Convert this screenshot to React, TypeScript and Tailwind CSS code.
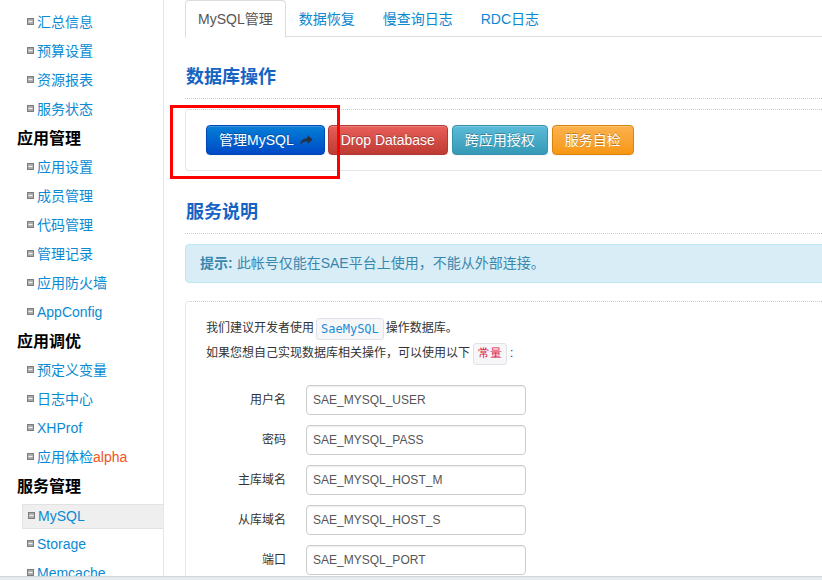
import React from "react";

type NavRow = { kind: "item" | "head"; label: string; active?: boolean; badge?: string };

const navRows: NavRow[] = [
  { kind: "item", label: "汇总信息" },
  { kind: "item", label: "预算设置" },
  { kind: "item", label: "资源报表" },
  { kind: "item", label: "服务状态" },
  { kind: "head", label: "应用管理" },
  { kind: "item", label: "应用设置" },
  { kind: "item", label: "成员管理" },
  { kind: "item", label: "代码管理" },
  { kind: "item", label: "管理记录" },
  { kind: "item", label: "应用防火墙" },
  { kind: "item", label: "AppConfig" },
  { kind: "head", label: "应用调优" },
  { kind: "item", label: "预定义变量" },
  { kind: "item", label: "日志中心" },
  { kind: "item", label: "XHProf" },
  { kind: "item", label: "应用体检", badge: "alpha" },
  { kind: "head", label: "服务管理" },
  { kind: "item", label: "MySQL", active: true },
  { kind: "item", label: "Storage" },
  { kind: "item", label: "Memcache" },
];

const tabs = ["MySQL管理", "数据恢复", "慢查询日志", "RDC日志"];

const constants = [
  { label: "用户名", value: "SAE_MYSQL_USER" },
  { label: "密码", value: "SAE_MYSQL_PASS" },
  { label: "主库域名", value: "SAE_MYSQL_HOST_M" },
  { label: "从库域名", value: "SAE_MYSQL_HOST_S" },
  { label: "端口", value: "SAE_MYSQL_PORT" },
];

const Bullet = () => (
  <svg width="7" height="7" viewBox="0 0 7 7" className="shrink-0 -mt-[3px]">
    <rect x="0.5" y="0.5" width="6" height="6" fill="#a9a9a9" stroke="#7d7d7d" />
    <line x1="1.5" y1="3.5" x2="5.5" y2="3.5" stroke="#f2f2f2" strokeWidth="1.2" />
  </svg>
);

const ShareIcon = () => (
  <svg width="14" height="12" viewBox="0 0 14 12" className="ml-[5px]">
    <path
      d="M1 11 C1.5 6.5 4.5 4.2 8.5 4.2 V1 L13.5 5.6 L8.5 10.2 V7.2 C5.2 7.2 2.8 8.5 1 11 Z"
      fill="#26313d"
    />
  </svg>
);

const Sidebar = () => (
  <aside className="w-[164px] shrink-0 border-r border-[#e6e6e6] pt-[8px] overflow-hidden">
    {navRows.map((row) =>
      row.kind === "head" ? (
        <div
          key={row.label}
          className="h-[29px] flex items-center pl-[17px] text-[16px] font-bold text-black"
        >
          {row.label}
        </div>
      ) : row.active ? (
        <div key={row.label} className="h-[29px] flex items-center">
          <div className="ml-[22px] flex-1 h-[25px] mt-[2px] flex items-center gap-[3px] pl-[5px] bg-[#efefef] border border-r-0 border-[#e2e2e2]">
            <Bullet />
            <span className="text-[14px] text-[#0a8ad2]">{row.label}</span>
          </div>
        </div>
      ) : (
        <div key={row.label} className="h-[29px] flex items-center gap-[3px] pl-[27px]">
          <Bullet />
          <span className="text-[14px] text-[#0a8ad2]">
            {row.label}
            {row.badge && <span className="text-[#f2541b]">{row.badge}</span>}
          </span>
        </div>
      )
    )}
  </aside>
);

const Tabs = () => (
  <ul className="flex h-[37px] border-b border-[#dddddd] w-[calc(100%+20px)]">
    {tabs.map((t, i) =>
      i === 0 ? (
        <li
          key={t}
          className="-mb-px px-[12px] pt-[8px] h-[38px] text-[14px] leading-[20px] text-[#555555] bg-white border border-[#dddddd] border-b-white rounded-t-[4px]"
        >
          {t}
        </li>
      ) : (
        <li
          key={t}
          className="mr-[2px] px-[13px] pt-[9px] text-[14px] leading-[20px] text-[#0a88d0]"
        >
          {t}
        </li>
      )
    )}
  </ul>
);

const SectionTitle = ({ children, className }: { children: React.ReactNode; className: string }) => (
  <div className={className}>
    <h3 className="text-[18px] leading-[24px] font-bold text-[#1563c2] pl-px pb-[9px] border-b border-dotted border-[#c8c8c8] w-[calc(100%+20px)]">
      {children}
    </h3>
  </div>
);

const btnBase =
  "h-[30px] px-[12px] rounded-[4px] text-[14px] text-white flex items-center border [text-shadow:0_-1px_0_rgba(0,0,0,0.25)] shadow-[inset_0_1px_0_rgba(255,255,255,0.2),0_1px_2px_rgba(0,0,0,0.05)]";

export default function App() {
  return (
    <div
      className="relative w-[822px] h-[580px] overflow-hidden bg-white flex flex-col"
      style={{ fontFamily: "'Liberation Sans', 'Noto Sans CJK SC', Arial, sans-serif" }}
    >
      <div className="flex flex-1 min-h-0">
        <Sidebar />

        <main className="flex-1 min-w-0 pl-[21px] overflow-hidden">
          <Tabs />

          <SectionTitle className="mt-[28px]">数据库操作</SectionTitle>

          {/* actions box */}
          <div className="mt-[10px] w-[calc(100%+20px)] border border-[#e6e6e6] [border-top-style:dotted] border-t-[#cfcfcf] rounded-[4px] pl-[20px] py-[15px] flex gap-[3px]">
            <button className={`${btnBase} border-[#0046b8] bg-gradient-to-b from-[#0b7fd6] to-[#0048c6] pr-[11px]`}>
              管理MySQL
              <ShareIcon />
            </button>
            <button className={`${btnBase} border-[#b23a35] bg-gradient-to-b from-[#ea5f5a] to-[#bd3a33]`}>
              Drop Database
            </button>
            <button className={`${btnBase} border-[#3a91ad] bg-gradient-to-b from-[#5bbcda] to-[#3499b6] ml-[1px]`}>
              跨应用授权
            </button>
            <button className={`${btnBase} border-[#d9830d] bg-gradient-to-b from-[#fbb24c] to-[#f7960d] ml-[1px]`}>
              服务自检
            </button>
          </div>

          <SectionTitle className="mt-[29px]">服务说明</SectionTitle>

          <div className="mt-[10px] w-[calc(100%+20px)] h-[39px] flex items-center pl-[14px] bg-[#d9edf7] border border-[#bce8f1] rounded-[4px] text-[14px] text-[#3a87ad]">
            <span className="font-bold">提示:</span>
            <span className="ml-[4px]">此帐号仅能在SAE平台上使用，不能从外部连接。</span>
          </div>

          {/* constants box */}
          <div className="mt-[18px] w-[calc(100%+20px)] border border-[#e8e8e8] [border-top-style:dotted] border-t-[#cfcfcf] rounded-[4px] pl-[20px] pt-[14px] pb-[20px] text-[12px] text-[#333333]">
            <p className="leading-[25px] flex items-center">
              我们建议开发者使用
              <code
                className="mx-[2px] px-[4px] py-[1px] leading-[18px] bg-[#f7f7f9] border border-[#e1e1e8] rounded-[3px] text-[12px] text-[#1b8ed6]"
                style={{ fontFamily: "'DejaVu Sans Mono', 'Liberation Mono', monospace" }}
              >
                SaeMySQL
              </code>
              操作数据库。
            </p>
            <p className="leading-[25px] flex items-center">
              如果您想自己实现数据库相关操作，可以使用以下
              <code className="mx-[3px] px-[4px] py-[1px] leading-[18px] bg-[#f7f7f9] border border-[#e1e1e8] rounded-[3px] text-[12px] text-[#dd1144]">
                常量
              </code>
              :
            </p>

            <div className="mt-[19px] flex flex-col gap-[10px]">
              {constants.map((c) => (
                <div key={c.label} className="flex items-center">
                  <label className="w-[80px] text-right text-[12px] text-[#333333]">{c.label}</label>
                  <div className="ml-[20px] w-[220px] h-[30px] flex items-center px-[6px] border border-[#cccccc] rounded-[4px] shadow-[inset_0_1px_1px_rgba(0,0,0,0.075)] text-[12px] text-[#555555]">
                    {c.value}
                  </div>
                </div>
              ))}
            </div>
          </div>
        </main>
      </div>

      {/* bottom scroll strip */}
      <div className="h-[4px] shrink-0 bg-[#e6ebf0] border-t border-[#cfd6dc]" />

      {/* red annotation frame */}
      <div className="absolute left-[170px] top-[105px] w-[170px] h-[74px] border-[3px] border-[#ff0000] pointer-events-none" />
    </div>
  );
}
